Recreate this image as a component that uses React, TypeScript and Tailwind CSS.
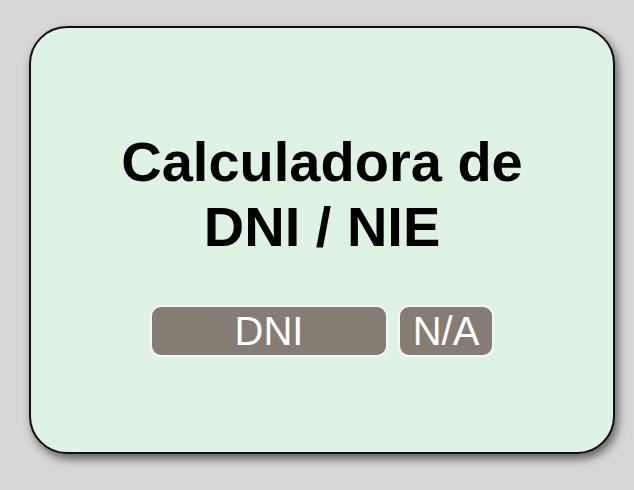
import React from 'react';

export default function App() {
  return (
    <div className="min-h-[490px] w-full bg-[#d8d6d7] pt-[26px] pl-[29px]" style={{ fontFamily: '"Liberation Sans", Arial, sans-serif' }}>
      <div className="w-[586px] h-[428px] rounded-[38px] border-2 border-[#111] bg-[#dff3e4] shadow-[3px_5px_10px_rgba(0,0,0,0.55)] flex flex-col items-center pt-[101px]">
        <h1 className="text-[56px] leading-[65px] font-bold text-black text-center">
          Calculadora de
          <br />
          DNI / NIE
        </h1>
        <div className="mt-[46px] flex gap-[10px]">
          <div className="w-[238px] h-[52px] rounded-[11px] border-2 border-[#f6f6f6] bg-[#857c73] text-white text-[40px] leading-[48px] text-center">
            DNI
          </div>
          <div className="w-[96px] h-[52px] rounded-[11px] border-2 border-[#f6f6f6] bg-[#857c73] text-white text-[40px] leading-[48px] text-center">
            N/A
          </div>
        </div>
      </div>
    </div>
  );
}
